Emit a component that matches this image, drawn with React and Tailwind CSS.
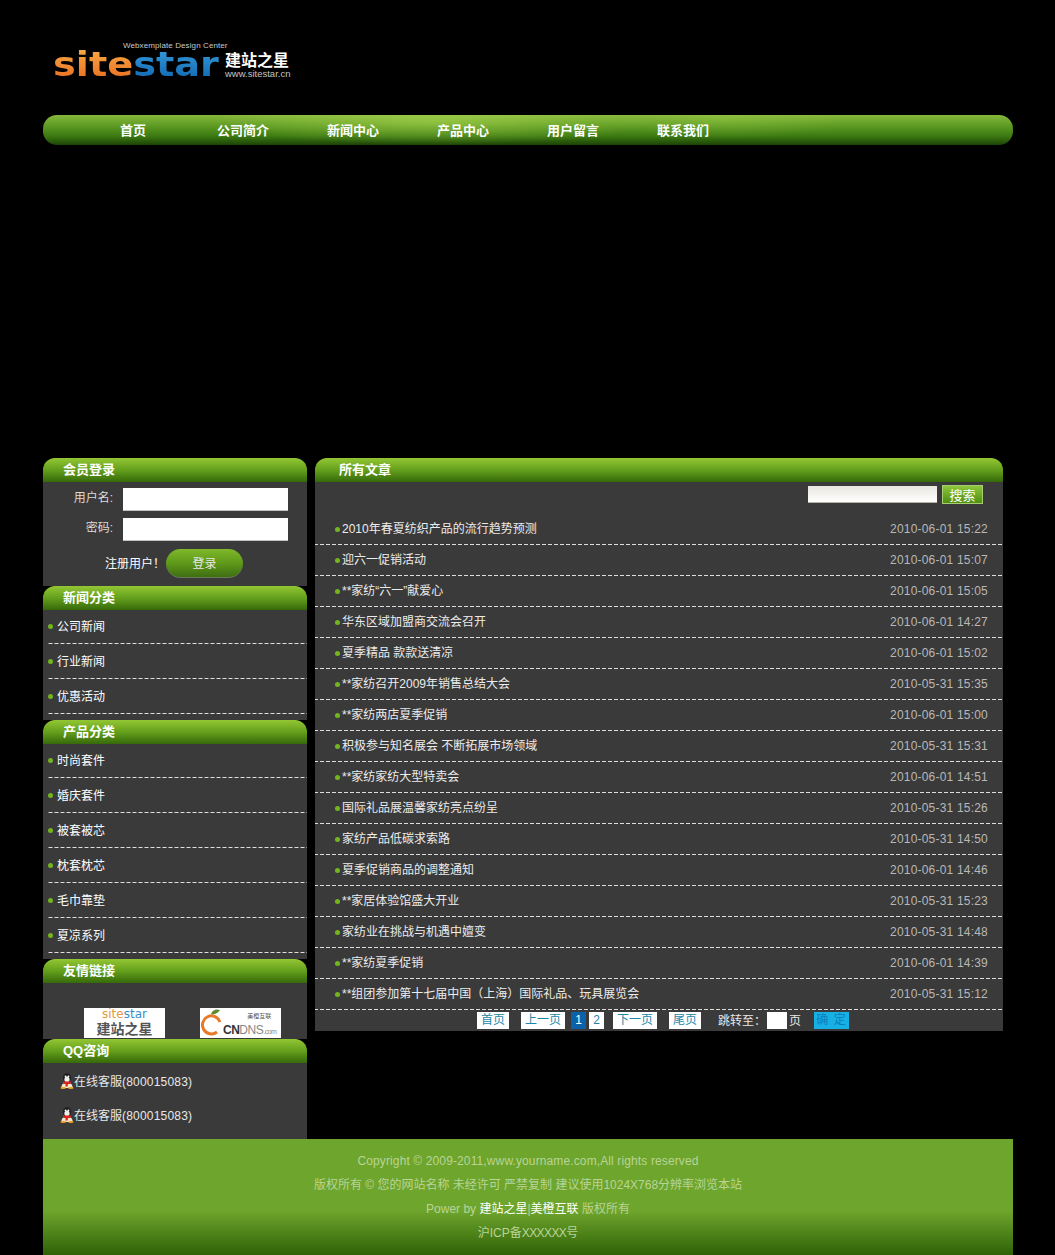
const nav = ["首页", "公司简介", "新闻中心", "产品中心", "用户留言", "联系我们"];
const newsCats = ["公司新闻", "行业新闻", "优惠活动"];
const productCats = ["时尚套件", "婚庆套件", "被套被芯", "枕套枕芯", "毛巾靠垫", "夏凉系列"];
const articles = [
  ["2010年春夏纺织产品的流行趋势预测", "2010-06-01 15:22"],
  ["迎六一促销活动", "2010-06-01 15:07"],
  ["**家纺“六一”献爱心", "2010-06-01 15:05"],
  ["华东区域加盟商交流会召开", "2010-06-01 14:27"],
  ["夏季精品 款款送清凉", "2010-06-01 15:02"],
  ["**家纺召开2009年销售总结大会", "2010-05-31 15:35"],
  ["**家纺两店夏季促销", "2010-06-01 15:00"],
  ["积极参与知名展会 不断拓展市场领域", "2010-05-31 15:31"],
  ["**家纺家纺大型特卖会", "2010-06-01 14:51"],
  ["国际礼品展温馨家纺亮点纷呈", "2010-05-31 15:26"],
  ["家纺产品低碳求索路", "2010-05-31 14:50"],
  ["夏季促销商品的调整通知", "2010-06-01 14:46"],
  ["**家居体验馆盛大开业", "2010-05-31 15:23"],
  ["家纺业在挑战与机遇中嬗变", "2010-05-31 14:48"],
  ["**家纺夏季促销", "2010-06-01 14:39"],
  ["**组团参加第十七届中国（上海）国际礼品、玩具展览会", "2010-05-31 15:12"],
];

function Bar({ title, indent = "pl-5" }) {
  return (
    <div className={`h-6 rounded-t-[12px] bg-gradient-to-b from-[#93c633] via-[#64a01c] to-[#366a0a] ${indent} text-[13px] leading-[24px] font-bold text-white`}>
      {title}
    </div>
  );
}

function Dot() {
  return <span className="w-[5px] h-[5px] rounded-full bg-[#74b41e] shrink-0"></span>;
}

// dashes are 4 on, 2 off, a plain border-dashed comes out too fine
const dashed = "bg-[linear-gradient(to_right,#dedede_4px,transparent_4px)] bg-[length:6px_1px] bg-repeat-x bg-bottom";

function CatList({ items }) {
  return (
    <div className="bg-[#3a3a3a] h-full">
      {items.map((item) => (
        <div key={item} className={`ml-[5px] h-[35px] first:h-[34px] pt-px first:pt-0 flex items-center gap-1 pb-px text-[12px] text-white ${dashed}`}>
          <Dot />
          {item}
        </div>
      ))}
    </div>
  );
}

function QQIcon() {
  return (
    <svg width="14" height="16" viewBox="0 0 14 16" className="mt-[8px] -ml-px shrink-0">
      <ellipse cx="7" cy="5" rx="4" ry="4.8" fill="#1c1c1c" />
      <ellipse cx="7" cy="6.4" rx="2.6" ry="2.6" fill="#eee" />
      <circle cx="5.6" cy="3.4" r="1" fill="#fff" />
      <circle cx="8.4" cy="3.4" r="1" fill="#fff" />
      <path d="M2 12 C3 8.5 11 8.5 12 12 L13 15 H1 Z" fill="#f1e7cf" />
      <path d="M3 8.5 H11 L10.5 11 H8 L7.6 13.5 H5.4 L5.6 11 H3.5 Z" fill="#d8261c" />
      <ellipse cx="3.2" cy="15" rx="2.8" ry="1" fill="#f0a020" />
      <ellipse cx="10.8" cy="15" rx="2.8" ry="1" fill="#f0a020" />
    </svg>
  );
}

function PageBtn({ children, className = "" }) {
  return <span className={`h-[17px] bg-white text-[#1c87a8] text-[12px] leading-[17px] text-center ${className}`}>{children}</span>;
}

export default function App() {
  return (
    <div className="bg-black min-h-[1255px] font-['Liberation_Sans','Noto_Sans_CJK_SC',sans-serif]">
      <div className="w-[970px] ml-[43px]">
        {/* LOGO */}
        <div className="h-[115px] pl-[10px] pt-[41px] overflow-hidden">
          <div className="h-[9px] pl-[70px] text-[8px] leading-[9px] tracking-[0.1px] text-[#c8c8c8] whitespace-nowrap">
            Webxemplate Design Center
          </div>
          <div className="flex items-start mt-[2px]">
            <div className="w-[170px] h-[26px] font-['DejaVu_Sans',sans-serif] font-bold text-[33px] leading-[26px] whitespace-nowrap origin-left scale-x-[1.16]">
              <span className="bg-gradient-to-b from-[#f7b04a] to-[#e8651a] bg-clip-text text-transparent">site</span>
              <span className="bg-gradient-to-b from-[#3aa0e0] to-[#0b62ac] bg-clip-text text-transparent">star</span>
            </div>
            <div className="ml-[2px] w-[66px]">
              <div className="text-[16px] leading-[17px] font-bold text-white whitespace-nowrap">建站之星</div>
              <div className="text-[9.5px] leading-[9px] text-[#c4c4c4] whitespace-nowrap">www.sitestar.cn</div>
            </div>
          </div>
        </div>

        {/* NAV */}
        <div className="relative h-[30px] rounded-[14px] pl-[35px] flex bg-[linear-gradient(to_bottom,#86b83c_0%,#5f9c24_35%,#3c7a12_70%,#1c4406_100%)] overflow-hidden">
          <div className="absolute inset-0 bg-[radial-gradient(ellipse_220px_24px_at_390px_6px,rgba(190,230,90,0.45),transparent),radial-gradient(ellipse_120px_20px_at_680px_4px,rgba(170,220,80,0.25),transparent)]"></div>
          {nav.map((item) => (
            <div key={item} className="relative w-[110px] text-center text-[13px] leading-[31px] font-bold text-white">
              {item}
            </div>
          ))}
        </div>

        {/* BANNER SPACE */}
        <div className="h-[313px]"></div>

        {/* MAIN */}
        <div className="flex gap-2 items-start">
          {/* LEFT */}
          <div className="w-[264px]">
            <Bar title="会员登录" />
            <div className="h-[104px] bg-[#3a3a3a] pt-[6px] text-[12px]">
              <div className="flex items-center h-[23px]">
                <span className="w-[70px] text-right text-[#dcdcdc] -mt-[3px]">用户名:</span>
                <span className="ml-[10px] w-[165px] h-[23px] bg-white border-b border-[#c4c4c4]"></span>
              </div>
              <div className="flex items-center h-[23px] mt-[7px]">
                <span className="w-[70px] text-right text-[#dcdcdc] -mt-[3px]">密码:</span>
                <span className="ml-[10px] w-[165px] h-[23px] bg-white border-b border-[#c4c4c4]"></span>
              </div>
              <div className="flex items-center mt-2 pl-[62px]">
                <span className="w-[61px] text-white">注册用户！</span>
                <span className="w-[77px] h-[29px] rounded-full bg-gradient-to-b from-[#7fb82a] via-[#5f9a1a] to-[#3f6e12] border-b border-[#6a7a58] text-center leading-[30px] text-[#e8e8e8]">
                  登录
                </span>
              </div>
            </div>

            <Bar title="新闻分类" />
            <div className="h-[110px] overflow-hidden"><CatList items={newsCats} /></div>

            <Bar title="产品分类" />
            <div className="h-[215px] overflow-hidden"><CatList items={productCats} /></div>

            <Bar title="友情链接" />
            <div className="h-[56px] bg-[#3a3a3a] pt-[25px] pl-[41px] flex gap-[35px]">
              <div className="w-[81px] h-[30px] bg-white text-center">
                <div className="text-[12px] leading-[13px] font-['DejaVu_Sans',sans-serif] text-[#e89a3c]">site<span className="text-[#3a8fc8]">star</span></div>
                <div className="text-[14px] leading-[17px] font-bold text-[#555]">建站之星</div>
              </div>
              <div className="w-[81px] h-[30px] bg-white flex pl-px">
                <svg width="22" height="30" viewBox="0 0 22 30" className="shrink-0">
                  <path d="M16 24 A9 9 0 1 1 19 14" fill="none" stroke="#e8792a" strokeWidth="3" />
                  <path d="M10 6 C12 1 16 1 19 2 C17 5 14 7 10 6 Z" fill="#5d8a2a" />
                </svg>
                <div className="text-right">
                  <div className="text-[6px] leading-[16px] text-[#555] pr-[5px]">美橙互联</div>
                  <div className="text-[12px] leading-[13px] font-bold text-[#333] tracking-[-0.5px] whitespace-nowrap">CN<span className="font-normal text-[#888]">DNS<span className="text-[7px]">.com</span></span></div>
                </div>
              </div>
            </div>

            <Bar title="QQ咨询" />
            <div className="h-[76px] bg-[#3a3a3a] pl-[18px] pt-[2px] text-[12px] leading-[34px] text-[#e8e8e8]">
              {[0, 1].map((i) => (
                <div key={i} className="flex items-start h-[34px]">
                  <QQIcon />
                  <span>在线客服<span className="tracking-[0.2px]">(800015083)</span></span>
                </div>
              ))}
            </div>
          </div>

          {/* RIGHT */}
          <div className="w-[688px]">
            <Bar title="所有文章" indent="pl-6" />
            <div className="bg-[#3a3a3a]">
              <div className="h-8 flex items-start justify-end pr-5 pt-[3px] gap-[5px]">
                <span className="w-[129px] h-[17px] mt-[1px] bg-gradient-to-b from-[#e8e6e0] to-white border-b border-[#b8b4a4]"></span>
                <span className="w-[41px] h-[19px] bg-gradient-to-b from-[#8cc63a] to-[#4f8f10] text-center text-[13px] leading-[19px] text-white border border-[#a8cc70]">搜索</span>
              </div>
              {articles.map(([title, date]) => (
                <div key={title} className={`h-[31px] flex items-center pb-px pl-5 pr-[15px] text-[12px] ${dashed}`}>
                  <Dot />
                  <span className="ml-[2px] text-[#ececec]">{title}</span>
                  <span className="ml-auto text-[#b8b8b8] tracking-[0.2px]">{date}</span>
                </div>
              ))}
              <div className="h-[21px] flex items-center pl-[162px] text-[12px] text-[#e8e8e8]">
                <PageBtn className="w-8">首页</PageBtn>
                <PageBtn className="w-11 ml-3">上一页</PageBtn>
                <span className="w-[15px] h-[17px] ml-[6px] bg-[#0a62aa] text-white text-center leading-[17px]">1</span>
                <PageBtn className="w-[15px] ml-[3px]">2</PageBtn>
                <PageBtn className="w-11 ml-[9px]">下一页</PageBtn>
                <PageBtn className="w-8 ml-3">尾页</PageBtn>
                <span className="ml-[17px] w-[49px]">跳转至：</span>
                <span className="w-5 h-[17px] bg-white"></span>
                <span className="ml-[2px]">页</span>
                <span className="ml-[13px] w-[35px] h-[17px] bg-[#17b0e6] text-[#0b7fb8] text-center leading-[17px] tracking-[1px]">确 定</span>
              </div>
            </div>
          </div>
        </div>

        {/* FOOTER */}
        <div className="h-[116px] pt-[10px] bg-[linear-gradient(to_bottom,#6ea52c_0%,#6ea52c_62%,#2f6208_100%)] text-center text-[12px] leading-6 text-[#b9d496]">
          <p className="tracking-[0.12px]">Copyright © 2009-2011,www.yourname.com,All rights reserved</p>
          <p>版权所有 © 您的网站名称 未经许可 严禁复制 建议使用1024X768分辨率浏览本站</p>
          <p>Power by <span className="text-white">建站之星</span>|<span className="text-white">美橙互联</span> 版权所有</p>
          <p>沪ICP备<span className="tracking-[-0.6px]">XXXXXX</span>号</p>
        </div>
      </div>
    </div>
  );
}
